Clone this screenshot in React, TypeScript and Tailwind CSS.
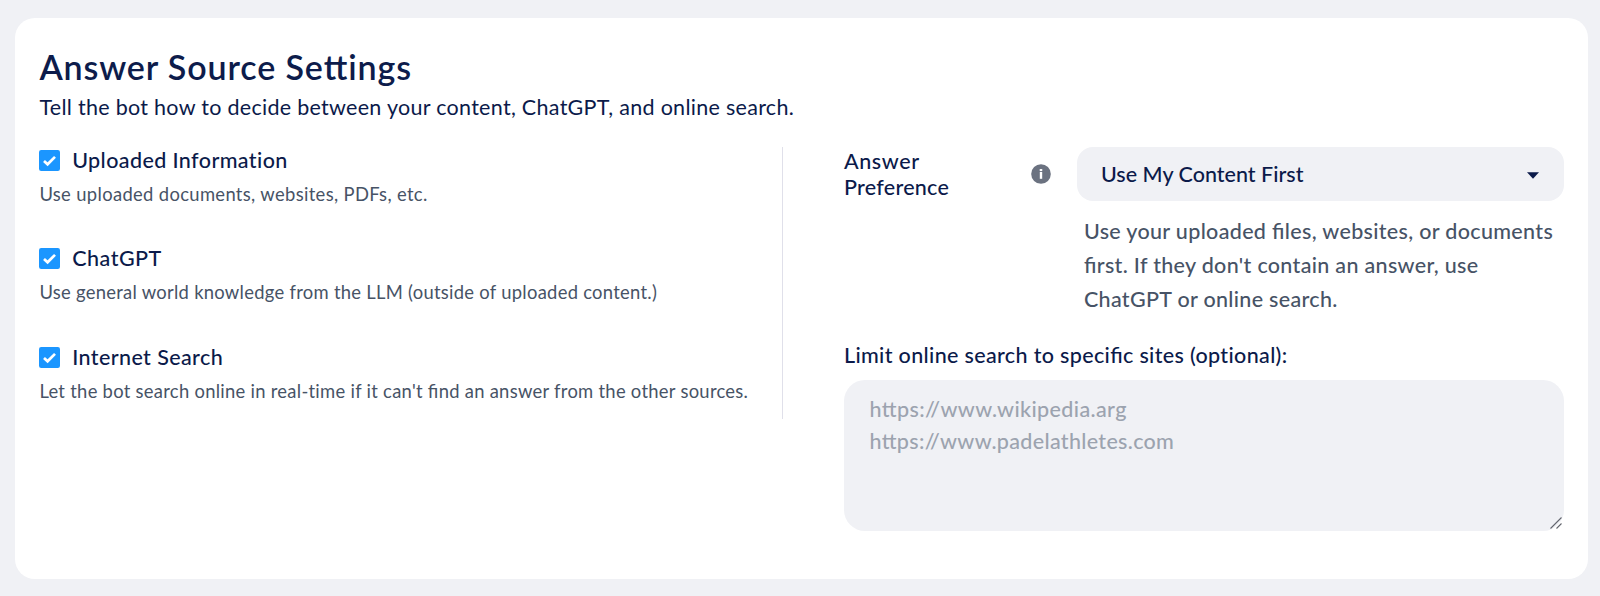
import type { ReactNode } from "react";

/* Keeps joined glyphs (fi, tt) while the text around is letter-spaced. */
function Joined({ children }: { children: ReactNode }) {
  return <span className="[font-feature-settings:'liga'_1]">{children}</span>;
}

function CheckIcon() {
  return (
    <svg viewBox="0 0 21 21" className="size-[21px] shrink-0" aria-hidden="true">
      <rect width="21" height="21" rx="2.2" fill="#1b96ff" />
      <path d="M5 10.9 8.6 14.3 16 6.9" fill="none" stroke="#fff" strokeWidth="2.7" />
    </svg>
  );
}

interface SourceProps {
  label: string;
  labelClass: string;
  hintClass: string;
  children: ReactNode;
}

function Source({ label, labelClass, hintClass, children }: SourceProps) {
  return (
    <div className="h-[98.3px]">
      <label className="flex h-[27px] items-center gap-[11.8px]">
        <CheckIcon />
        <span className={`text-[21.5px] font-medium leading-[27px] ${labelClass}`}>{label}</span>
      </label>
      <p className={`mt-[7px] whitespace-nowrap text-[18.4px] leading-[26px] text-[#475366] ${hintClass}`}>
        {children}
      </p>
    </div>
  );
}

export default function App() {
  return (
    <div className="h-[596px] bg-[#f0f1f5] pt-[18px] pr-[12px] pl-[15px] font-['Lato','Open_Sans',sans-serif] text-[#0b1a4a]">
      <main className="h-[561px] rounded-[20px] bg-white pt-[27px] pr-[24px] pl-[24.4px]">
        <h1 className="text-[34px] font-semibold leading-[44px] tracking-[0.88px] text-[#0d1c4b]">
          Answer Source Se<Joined>tt</Joined>ings
        </h1>
        <p className="mt-[5px] text-[21.5px] leading-[27px] tracking-[0.29px]">
          Tell the bot how to decide between your content, ChatGPT, and online search.
        </p>

        <div className="mt-[26px] flex items-start">
          <section className="h-[272px] w-[743.6px] border-r border-[#e0e0ea]">
            <Source label="Uploaded Information" labelClass="tracking-[0.4px]" hintClass="tracking-[0.34px]">
              Use uploaded documents, websites, PDFs, etc.
            </Source>
            <Source label="ChatGPT" labelClass="tracking-[0.5px]" hintClass="tracking-[0.28px]">
              Use general world knowledge from the LLM (outside of uploaded content.)
            </Source>
            <Source label="Internet Search" labelClass="tracking-[0.4px]" hintClass="tracking-[0.28px]">
              Let the bot search online in real-time if it can't <Joined>fi</Joined>nd an answer from the other sources.
            </Source>
          </section>

          <section className="ml-[61px] flex-1">
            <div className="flex">
              <div className="flex h-[54px] w-[233px] items-center justify-between pr-[26.2px]">
                <span className="text-[21.5px] font-medium leading-[26px]">
                  <span className="block tracking-[0.6px]">Answer</span>
                  <span className="block tracking-[0.25px]">Preference</span>
                </span>
                <svg viewBox="0 0 20 20" className="size-[20px]" aria-hidden="true">
                  <circle cx="10" cy="10" r="9.8" fill="#6b7280" />
                  <rect x="8.7" y="5" width="2.6" height="2.1" rx="0.6" fill="#fff" />
                  <path d="M8.8 7.9h2.4v6.9H8.8z" fill="#fff" />
                </svg>
              </div>
              <div className="flex-1">
                <button className="flex h-[54px] w-full items-center justify-between rounded-[16px] bg-[#f0f1f5] pr-[25px] pl-[24px]">
                  <span className="text-[21.5px] font-medium leading-[27px] tracking-[0.02px]">Use My Content First</span>
                  <svg viewBox="0 0 12 7" className="mt-[2px] h-[7px] w-[12px]" aria-hidden="true">
                    <path d="M0 0.2h12L6 6.8z" fill="#0b1a4a" />
                  </svg>
                </button>
                <p className="mt-[12.5px] pl-[7px] text-[21.5px] font-medium leading-[34.2px] whitespace-nowrap text-[#475366]">
                  <span className="block tracking-[0.33px]">
                    Use your uploaded <Joined>fi</Joined>les, websites, or documents
                  </span>
                  <span className="block tracking-[0.32px]">
                    <Joined>fi</Joined>rst. If they don't contain an answer, use
                  </span>
                  <span className="block tracking-[0.31px]">ChatGPT or online search.</span>
                </p>
              </div>
            </div>

            <p className="mt-[21.9px] text-[21.5px] font-medium leading-[34px] tracking-[0.35px] text-[#0b1a4a]">
              Limit online search to speci<Joined>fi</Joined>c sites (optional):
            </p>
            <div className="mt-[8px] flex h-[151px] items-end justify-between rounded-[21px] bg-[#f0f1f5] pl-[25.4px]">
              <p className="h-full pt-[14px] text-[21.5px] font-medium leading-[31.5px] text-[#9ca3af]">
                <span className="block tracking-[0.38px]">
                  h<Joined>tt</Joined>ps://www.wikipedia.arg
                </span>
                <span className="block tracking-[0.32px]">
                  h<Joined>tt</Joined>ps://www.padelathletes.com
                </span>
              </p>
              <svg viewBox="0 0 12 12" className="mr-[2.5px] mb-[2px] size-[12px]" aria-hidden="true">
                <path d="M0.5 11.5 11.5 0.5M6.5 11.5l5-5" fill="none" stroke="#62656d" strokeWidth="1.1" />
              </svg>
            </div>
          </section>
        </div>
      </main>
    </div>
  );
}
